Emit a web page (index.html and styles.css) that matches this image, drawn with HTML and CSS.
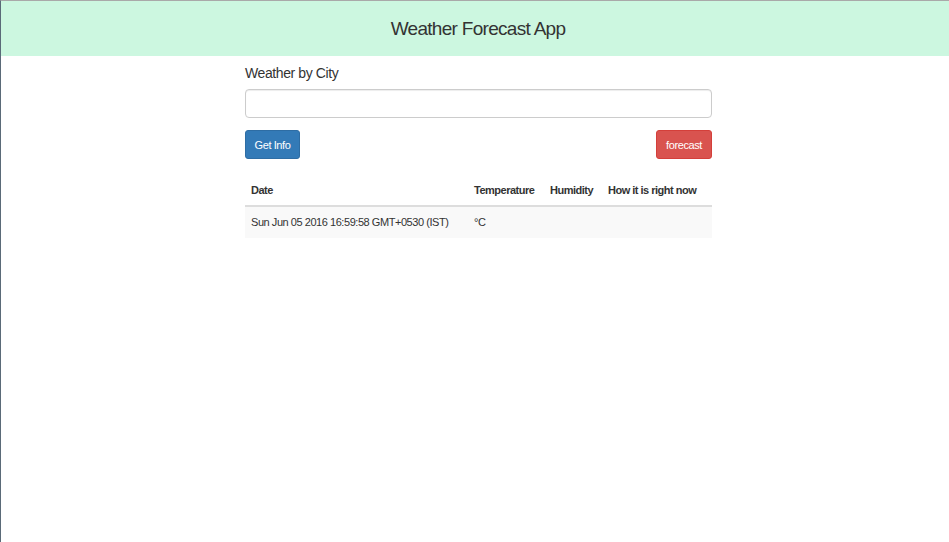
FILE: index.html
```html
<!DOCTYPE html>
<html>
<head>
<meta charset="utf-8">
<link rel="stylesheet" href="styles.css">
</head>
<body>
<div class="frame">
  <header class="topbar"><h1 class="title">Weather Forecast App</h1></header>
  <main class="content">
    <label class="label" for="city">Weather by City</label>
    <input class="field" id="city" type="text">
    <div class="actions">
      <button class="btn btn-blue">Get Info</button>
      <button class="btn btn-red">forecast</button>
    </div>
    <table class="grid">
      <thead>
        <tr><th class="c-date">Date</th><th class="c-temp">Temperature</th><th class="c-hum">Humidity</th><th class="c-now">How it is right now</th></tr>
      </thead>
      <tbody>
        <tr><td>Sun Jun 05 2016 16:59:58 GMT+0530 (IST)</td><td>°C</td><td></td><td></td></tr>
      </tbody>
    </table>
  </main>
</div>
</body>
</html>
```
FILE: styles.css
```css
html, body { margin: 0; padding: 0; height: 100%; }
body { font-family: "Liberation Sans", Arial, sans-serif; color: #333; background: #fff; }
.frame { min-height: 100%; box-sizing: border-box; border-top: 1px solid #a9a9a9; border-left: 1px solid #5a6a78; }
.topbar { height: 55px; background: #ccf7e0; display: flex; align-items: center; justify-content: center; padding-left: 6px; }
.title { margin: 0; font-size: 19px; letter-spacing: -0.7px; font-weight: 400; color: #333; }
.content { width: 467px; margin-left: 244px; padding-top: 7px; display: flex; flex-direction: column; }
.label { font-size: 14px; letter-spacing: -0.4px; line-height: 20px; margin-bottom: 6px; }
.field { box-sizing: border-box; height: 29px; width: 100%; border: 1px solid #ccc; border-radius: 4px; box-shadow: inset 0 1px 1px rgba(0,0,0,.075); padding: 4px 10px; font: inherit; }
.actions { display: flex; justify-content: space-between; margin-top: 12px; }
.btn { box-sizing: border-box; height: 29px; padding: 0; white-space: nowrap; border-radius: 3px; font-family: inherit; font-size: 11px; letter-spacing: -0.4px; color: #fff; border: 1px solid transparent; }
.btn-blue { background: #337ab7; border-color: #2e6da4; width: 55px; }
.btn-red { background: #d9534f; border-color: #d43f3a; width: 56px; }
.grid { margin-top: 15px; border-collapse: collapse; width: 100%; font-size: 11px; table-layout: fixed; }
.grid th { text-align: left; font-weight: 700; letter-spacing: -0.5px; padding: 9px 6px 8px 6px; line-height: 14px; border-bottom: 2px solid #ddd; vertical-align: bottom; white-space: nowrap; }
.grid td { padding: 8px 6px; line-height: 15px; letter-spacing: -0.45px; background: #f9f9f9; white-space: nowrap; }
.c-date { width: 211px; }
.c-temp { width: 64px; }
.c-hum { width: 46px; }
```
